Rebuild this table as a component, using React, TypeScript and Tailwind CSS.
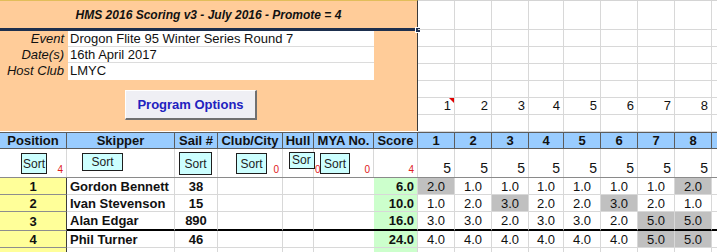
import React from "react";

type Result = {
  pos: number;
  name: string;
  sail: string;
  score: string;
  races: string[];
  drops: number[];
};

const results: Result[] = [
  { pos: 1, name: "Gordon Bennett", sail: "38", score: "6.0", races: ["2.0", "1.0", "1.0", "1.0", "1.0", "1.0", "1.0", "2.0"], drops: [0, 7] },
  { pos: 2, name: "Ivan Stevenson", sail: "15", score: "10.0", races: ["1.0", "2.0", "3.0", "2.0", "2.0", "3.0", "2.0", "1.0"], drops: [2, 5] },
  { pos: 3, name: "Alan Edgar", sail: "890", score: "16.0", races: ["3.0", "3.0", "2.0", "3.0", "3.0", "2.0", "5.0", "5.0"], drops: [6, 7] },
  { pos: 4, name: "Phil Turner", sail: "46", score: "24.0", races: ["4.0", "4.0", "4.0", "4.0", "4.0", "4.0", "5.0", "5.0"], drops: [6, 7] },
];

const raceWidths = ["w-[37px]", "w-[37px]", "w-[37px]", "w-[35px]", "w-[37px]", "w-[37px]", "w-[37px]", "w-[37px]"];
const topRowHeights = ["h-[29px]", "h-[17px]", "h-[17px]", "h-[17px]", "h-[17px]", "h-[17px]", "h-[17px]"];

const SortButton = ({ className }: { className: string }) => (
  <div
    className={`relative z-10 flex items-center justify-center overflow-hidden border border-[#1e1e1e] bg-[#ccffff] text-[12px] leading-none text-[#222] ${className}`}
  >
    Sort
  </div>
);

const Count = ({ value, className = "" }: { value: string; className?: string }) => (
  <span className={`ml-auto mb-[2px] self-end pr-[3px] text-[10px] leading-none text-[#e02020] ${className}`}>{value}</span>
);

const TopPanel = () => (
  <div className="relative h-[131px] w-[418px] shrink-0 border-r border-t border-r-[#3a3a3a] border-t-[#e2bd5a] bg-[#ffcc99]">
    <div className="flex h-[27px] items-center justify-center text-[12px] font-bold italic text-[#111]">
      HMS 2016 Scoring v3 - July 2016 - Promote = 4
    </div>
    <div className="h-[3px] bg-[#1d2f4e]" />
    {[
      ["Event", "Drogon Flite 95 Winter Series Round 7", "h-[16px] border-b"],
      ["Date(s)", "16th April 2017", "h-[16px] border-b"],
      ["Host Club", "LMYC", "h-[17px]"],
    ].map(([label, value, rowCls]) => (
      <div key={label} className="flex text-[13px] leading-[16px]">
        <div className="w-[68px] pr-[4px] text-right italic text-[#111]">{label}</div>
        <div className={`w-[306px] border-[#dcdcdc] bg-white pl-[2px] text-[#111] ${rowCls}`}>{value}</div>
      </div>
    ))}
    <div className="pl-[125px] pt-[10px]">
      <div className="flex h-[30px] w-[132px] items-center justify-center border-b-2 border-l border-r-2 border-t border-b-[#707070] border-l-white border-r-[#707070] border-t-white bg-[#efeff4] text-[13px] font-bold text-[#2121bf]">
        Program Options
      </div>
    </div>
    <div className="absolute right-[-4px] top-[26px] h-[6px] w-[6px] border border-white bg-[#1d2f4e]" />
  </div>
);

const TopGrid = () => (
  <div className="flex-1 border-t border-[#d4d4d4]">
    {topRowHeights.map((h, r) => (
      <div key={r} className={`flex ${h}`}>
        {raceWidths.map((w, i) => (
          <div
            key={i}
            className={`relative flex shrink-0 items-center justify-end border-b border-r border-[#d8d8d8] pr-[3px] text-[13px] text-[#111] ${w}`}
          >
            {r === 5 ? i + 1 : null}
            {r === 5 && i === 0 ? (
              <svg className="absolute right-0 top-0" width="5" height="5" viewBox="0 0 5 5">
                <path d="M0 0H5V5Z" fill="#e00000" />
              </svg>
            ) : null}
          </div>
        ))}
        <div className="flex-1 border-b border-[#d8d8d8]" />
      </div>
    ))}
  </div>
);

const HeaderRow = () => {
  const cols: [string, string][] = [
    ["w-[67px]", "Position"],
    ["w-[108px]", "Skipper"],
    ["w-[43px]", "Sail #"],
    ["w-[65px]", "Club/City"],
    ["w-[31px]", "Hull"],
    ["w-[60px]", "MYA No."],
    ["w-[44px]", "Score"],
  ];
  return (
    <div className="flex h-[17px] border-y border-[#5c5c5c] bg-[#99ccff] text-[13px] font-bold leading-[15px] text-[#111]">
      {cols.map(([w, label]) => (
        <div key={label} className={`shrink-0 overflow-hidden whitespace-nowrap border-r border-[#5c5c5c] text-center ${w}`}>
          {label}
        </div>
      ))}
      {raceWidths.map((w, i) => (
        <div key={i} className={`shrink-0 border-r border-[#5c5c5c] text-center ${w}`}>
          {i + 1}
        </div>
      ))}
      <div className="flex-1" />
    </div>
  );
};

const SortRow = () => (
  <div className="flex h-[29px] border-b border-[#8a8a8a] bg-white">
    <div className="flex w-[67px] shrink-0 border-r border-[#d8d8d8]">
      <SortButton className="ml-[21px] mt-[4px] h-[21px] w-[26px]" />
      <Count value="4" />
    </div>
    <div className="flex w-[108px] shrink-0 border-r border-[#d8d8d8]">
      <SortButton className="ml-[15px] mt-[4px] h-[18px] w-[41px]" />
    </div>
    <div className="flex w-[43px] shrink-0 border-r border-[#d8d8d8]">
      <SortButton className="ml-[4px] mt-[3px] h-[23px] w-[33px]" />
    </div>
    <div className="flex w-[65px] shrink-0 border-r border-[#d8d8d8]">
      <SortButton className="ml-[18px] mt-[4px] h-[21px] w-[31px]" />
      <Count value="0" />
    </div>
    <div className="flex w-[31px] shrink-0 border-r border-[#d8d8d8]">
      <div className="relative z-10 ml-[6px] mt-[3px] flex h-[17px] w-[26px] shrink-0 items-start justify-start overflow-hidden border border-[#1e1e1e] bg-[#ccffff] pl-[2px] pt-[1px] text-[12px] leading-none text-[#222]">
        Sor
      </div>
      <Count value="0" className="-ml-[10px]" />
    </div>
    <div className="flex w-[60px] shrink-0 border-r border-[#d8d8d8]">
      <SortButton className="ml-[6px] mt-[4px] h-[21px] w-[30px]" />
      <Count value="0" />
    </div>
    <div className="flex w-[44px] shrink-0 border-r border-[#d8d8d8]">
      <Count value="4" />
    </div>
    {raceWidths.map((w, i) => (
      <div
        key={i}
        className={`flex shrink-0 items-end justify-end border-r border-[#d8d8d8] pb-[2px] pr-[3px] text-[14px] leading-none text-[#111] ${w}`}
      >
        5
      </div>
    ))}
    <div className="flex-1" />
  </div>
);

const DataRow = ({ r }: { r: Result }) => {
  const thick = r.pos === 3;
  const rowH = thick ? "h-[19px]" : "h-[17px]";
  const line = thick ? "border-b-2 border-b-black" : "border-b border-b-[#d8d8d8]";
  return (
    <div className={`flex ${rowH} text-[13px] leading-[15px] text-[#111]`}>
      <div className="flex w-[67px] shrink-0 items-center justify-center border-b border-r border-b-[#8e8e8e] border-r-[#3c3c3c] bg-[#ffff99] font-bold">
        {r.pos}
      </div>
      <div className={`flex w-[108px] shrink-0 items-center whitespace-nowrap border-r border-r-[#d8d8d8] pl-[3px] font-bold ${line}`}>
        {r.name}
      </div>
      <div className={`flex w-[43px] shrink-0 items-center justify-center border-r border-r-[#d8d8d8] font-bold ${line}`}>
        {r.sail}
      </div>
      <div className={`w-[65px] shrink-0 border-r border-r-[#d8d8d8] ${line}`} />
      <div className={`w-[31px] shrink-0 border-r border-r-[#d8d8d8] ${line}`} />
      <div className={`w-[60px] shrink-0 ${line}`} />
      <div className={`flex w-[44px] shrink-0 items-center justify-end border-r border-r-[#d8d8d8] bg-[#ccffcc] pr-[3px] font-bold ${line}`}>
        {r.score}
      </div>
      {r.races.map((v, i) => (
        <div
          key={i}
          className={`flex shrink-0 items-center justify-center border-r border-r-[#d8d8d8] ${line} ${raceWidths[i]} ${
            r.drops.includes(i) ? "bg-[#c0c0c0]" : ""
          }`}
        >
          {v}
        </div>
      ))}
      <div className={`flex-1 ${line}`} />
    </div>
  );
};

export default function App() {
  return (
    <div className="h-[252px] w-[717px] overflow-hidden bg-white font-['Liberation_Sans',Arial,sans-serif]">
      <div className="flex">
        <TopPanel />
        <TopGrid />
      </div>
      <HeaderRow />
      <SortRow />
      {results.map(r => (
        <DataRow key={r.pos} r={r} />
      ))}
      <div className="flex h-[17px]">
        <div className="w-[67px] shrink-0 border-r border-[#3c3c3c] bg-[#ffff99]" />
        <div className="w-[108px] shrink-0 border-r border-[#d8d8d8]" />
        <div className="w-[43px] shrink-0 border-r border-[#d8d8d8]" />
        <div className="w-[65px] shrink-0 border-r border-[#d8d8d8]" />
        <div className="w-[31px] shrink-0 border-r border-[#d8d8d8]" />
        <div className="w-[60px] shrink-0" />
        <div className="w-[44px] shrink-0 border-r border-[#d8d8d8] bg-[#ccffcc]" />
        {raceWidths.map((w, i) => (
          <div key={i} className={`shrink-0 border-r border-[#d8d8d8] ${w}`} />
        ))}
      </div>
    </div>
  );
}
